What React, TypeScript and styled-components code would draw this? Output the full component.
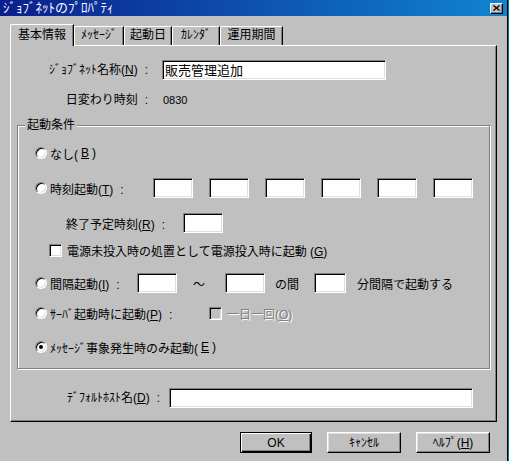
import styled, { createGlobalStyle } from "styled-components";

const GlobalStyle = createGlobalStyle`
  html, body {
    margin: 0;
    padding: 0;
    background: #008080;
  }
  body {
    font-family: "Liberation Sans", "Noto Sans CJK JP", sans-serif;
    font-size: 12px;
    color: #000000;
  }
`;

const Window = styled.div`
  width: 507px;
  height: 461px;
  background: #c0c0c0;
  border-right: 1px solid #000000;
  display: flex;
  flex-direction: column;
  overflow: hidden;
`;

const TitleBar = styled.div`
  height: 16px;
  background: linear-gradient(90deg, #0b1f8c 0%, #1084d0 100%);
  display: flex;
  align-items: center;
  justify-content: space-between;
  padding: 0 4px 0 3px;
`;

const TitleText = styled.span`
  color: #ffffff;
  font-size: 13px;
  line-height: 16px;
`;

const CloseButton = styled.div`
  width: 13px;
  height: 11px;
  box-sizing: border-box;
  background: #c0c0c0;
  border: 1px solid;
  border-color: #ffffff #000000 #000000 #ffffff;
  box-shadow: inset -1px -1px 0 #808080;
  display: flex;
  align-items: center;
  justify-content: center;
`;

const Body = styled.div`
  flex: 1;
  display: flex;
  flex-direction: column;
  padding: 8px 10px 0 10px;
`;

const TabRow = styled.div`
  display: flex;
  align-items: flex-end;
  height: 21px;
`;

const Tab = styled.div<{ $w: number; $active?: boolean }>`
  width: ${(p) => p.$w}px;
  height: ${(p) => (p.$active ? 22 : 19)}px;
  margin-bottom: ${(p) => (p.$active ? -1 : 0)}px;
  box-sizing: border-box;
  position: relative;
  z-index: ${(p) => (p.$active ? 1 : 0)};
  background: #c0c0c0;
  border-top: 1px solid #ffffff;
  border-left: 1px solid #ffffff;
  border-right: 1px solid #000000;
  border-top-left-radius: 2px;
  box-shadow: inset -1px 0 0 #808080;
  display: flex;
  justify-content: center;
  padding-top: ${(p) => (p.$active ? 3 : 1)}px;
  line-height: 14px;
  white-space: nowrap;
`;

const Panel = styled.div`
  height: 377px;
  box-sizing: border-box;
  border-top: 1px solid #ffffff;
  border-left: 1px solid #ffffff;
  border-right: 1px solid #000000;
  border-bottom: 1px solid #000000;
  box-shadow: inset -1px -1px 0 #808080;
  display: flex;
  flex-direction: column;
`;

const FieldRow = styled.div<{ $mt: number }>`
  display: flex;
  align-items: center;
  height: 20px;
  margin-top: ${(p) => p.$mt}px;
`;

const FieldLabel = styled.div<{ $w: number; $gap: number }>`
  width: ${(p) => p.$w}px;
  margin-right: ${(p) => p.$gap}px;
  text-align: right;
  white-space: nowrap;
  line-height: 20px;
`;

const Colon = styled.span`
  margin-left: 7px;
`;

const U = styled.span`
  text-decoration: underline;
`;

const TextBox = styled.div<{ $w: number }>`
  width: ${(p) => p.$w}px;
  height: 20px;
  box-sizing: border-box;
  background: #ffffff;
  border: 1px solid;
  border-color: #808080 #ffffff #ffffff #808080;
  box-shadow: inset 1px 1px 0 #000000, inset -1px -1px 0 #dfdfdf;
  padding: 1px 2px;
  font-size: 13px;
  line-height: 17px;
  white-space: nowrap;
  flex-shrink: 0;
`;

const Value = styled.span`
  margin-left: 1px;
  font-size: 11px;
`;

const Group = styled.div`
  margin: 15px 6px 0 6px;
  height: 244px;
  box-sizing: border-box;
  border: 1px solid #808080;
  box-shadow: 1px 1px 0 #ffffff, inset 1px 1px 0 #ffffff;
  display: flex;
  flex-direction: column;
  padding: 0 0 0 17px;
`;

const Legend = styled.div`
  align-self: flex-start;
  margin: -8px 0 0 -10px;
  padding: 0 2px;
  height: 14px;
  line-height: 14px;
  background: #c0c0c0;
`;

const OptionRow = styled.div<{ $mt: number; $indent?: number }>`
  display: flex;
  align-items: center;
  height: 20px;
  margin-top: ${(p) => p.$mt}px;
  padding-left: ${(p) => p.$indent ?? 0}px;
  white-space: nowrap;
`;

const RadioLabel = styled.label<{ $w?: number }>`
  display: flex;
  align-items: center;
  gap: 3px;
  width: ${(p) => (p.$w ? `${p.$w}px` : "auto")};
  flex-shrink: 0;
`;

const Radio = styled.span<{ $checked?: boolean }>`
  width: 12px;
  height: 12px;
  box-sizing: border-box;
  border-radius: 50%;
  background: #ffffff;
  border: 1px solid;
  border-color: #808080 #ffffff #ffffff #808080;
  box-shadow: inset 1px 1px 0 #000000, inset -1px -1px 0 #dfdfdf;
  display: flex;
  align-items: center;
  justify-content: center;
  &::after {
    content: "";
    width: 4px;
    height: 4px;
    border-radius: 50%;
    background: ${(p) => (p.$checked ? "#000000" : "transparent")};
  }
`;

const Check = styled.span<{ $disabled?: boolean }>`
  width: 13px;
  height: 13px;
  box-sizing: border-box;
  flex-shrink: 0;
  background: ${(p) => (p.$disabled ? "#c0c0c0" : "#ffffff")};
  border: 1px solid;
  border-color: #808080 #ffffff #ffffff #808080;
  box-shadow: inset 1px 1px 0 #000000, inset -1px -1px 0 #dfdfdf;
`;

const Text = styled.span<{ $ml?: number; $disabled?: boolean }>`
  margin-left: ${(p) => p.$ml ?? 0}px;
  color: ${(p) => (p.$disabled ? "#808080" : "#000000")};
  text-shadow: ${(p) => (p.$disabled ? "1px 1px 0 #ffffff" : "none")};
`;

const TimeBoxes = styled.div`
  display: flex;
  gap: 16px;
`;

const ButtonRow = styled.div`
  display: flex;
  justify-content: flex-end;
  gap: 15px;
  margin-top: 10px;
  padding-right: 7px;
`;

const Button = styled.div<{ $w: number; $default?: boolean }>`
  width: ${(p) => p.$w}px;
  height: 21px;
  box-sizing: border-box;
  background: #c0c0c0;
  border: 1px solid;
  border-color: ${(p) =>
    p.$default ? "#000000" : "#ffffff #000000 #000000 #ffffff"};
  box-shadow: ${(p) =>
    p.$default
      ? "inset 1px 1px 0 #ffffff, inset -1px -1px 0 #000000, inset -2px -2px 0 #808080"
      : "inset -1px -1px 0 #808080, inset 1px 1px 0 #dfdfdf"};
  display: flex;
  align-items: center;
  justify-content: center;
  line-height: 14px;
  white-space: nowrap;
`;

export default function App() {
  return (
    <>
      <GlobalStyle />
      <Window>
        <TitleBar>
          <TitleText>ｼﾞｮﾌﾞﾈｯﾄのﾌﾟﾛﾊﾟﾃｨ</TitleText>
          <CloseButton>
            <svg width="7" height="6" viewBox="0 0 7 6">
              <path d="M0.5 0.5 L6.5 5.5 M6.5 0.5 L0.5 5.5" stroke="#000" strokeWidth="1.3" />
            </svg>
          </CloseButton>
        </TitleBar>
        <Body>
          <TabRow>
            <Tab $w={64} $active>基本情報</Tab>
            <Tab $w={50}>ﾒｯｾｰｼﾞ</Tab>
            <Tab $w={48}>起動日</Tab>
            <Tab $w={48}>ｶﾚﾝﾀﾞ</Tab>
            <Tab $w={63}>運用期間</Tab>
          </TabRow>
          <Panel>
            <FieldRow $mt={14}>
              <FieldLabel $w={137} $gap={14}>
                ｼﾞｮﾌﾞﾈｯﾄ名称(<U>N</U>)<Colon>:</Colon>
              </FieldLabel>
              <TextBox $w={224}>販売管理追加</TextBox>
            </FieldRow>
            <FieldRow $mt={10}>
              <FieldLabel $w={137} $gap={14}>
                日変わり時刻<Colon>:</Colon>
              </FieldLabel>
              <Value>0830</Value>
            </FieldRow>

            <Group>
              <Legend>起動条件</Legend>

              <OptionRow $mt={11}>
                <RadioLabel>
                  <Radio />
                  なし(<U>B</U>)
                </RadioLabel>
              </OptionRow>

              <OptionRow $mt={15}>
                <RadioLabel $w={118}>
                  <Radio />
                  <span>
                    時刻起動(<U>T</U>)<Colon>:</Colon>
                  </span>
                </RadioLabel>
                <TimeBoxes>
                  {[0, 1, 2, 3, 4, 5].map((i) => (
                    <TextBox key={i} $w={40} />
                  ))}
                </TimeBoxes>
              </OptionRow>

              <OptionRow $mt={15} $indent={31}>
                <Text>
                  終了予定時刻(<U>R</U>)<Colon>:</Colon>
                </Text>
                <Text $ml={18} />
                <TextBox $w={40} />
              </OptionRow>

              <OptionRow $mt={7} $indent={14}>
                <Check />
                <Text $ml={5}>
                  電源未投入時の処置として電源投入時に起動 (<U>G</U>)
                </Text>
              </OptionRow>

              <OptionRow $mt={13}>
                <RadioLabel $w={102}>
                  <Radio />
                  <span>
                    間隔起動(<U>I</U>)<Colon>:</Colon>
                  </span>
                </RadioLabel>
                <TextBox $w={40} />
                <Text $ml={16}>～</Text>
                <Text $ml={20} />
                <TextBox $w={40} />
                <Text $ml={10}>の間</Text>
                <Text $ml={15} />
                <TextBox $w={32} />
                <Text $ml={11}>分間隔で起動する</Text>
              </OptionRow>

              <OptionRow $mt={10}>
                <RadioLabel $w={174}>
                  <Radio />
                  <span>
                    ｻｰﾊﾞ起動時に起動(<U>P</U>)<Colon>:</Colon>
                  </span>
                </RadioLabel>
                <Check $disabled />
                <Text $ml={5} $disabled>
                  一日一回(<U>O</U>)
                </Text>
              </OptionRow>

              <OptionRow $mt={14}>
                <RadioLabel>
                  <Radio $checked />
                  ﾒｯｾｰｼﾞ事象発生時のみ起動(<U>E</U>)
                </RadioLabel>
              </OptionRow>
            </Group>

            <FieldRow $mt={19}>
              <FieldLabel $w={149} $gap={9}>
                ﾃﾞﾌｫﾙﾄﾎｽﾄ名(<U>D</U>)<Colon>:</Colon>
              </FieldLabel>
              <TextBox $w={304} />
            </FieldRow>
          </Panel>

          <ButtonRow>
            <Button $w={72} $default>OK</Button>
            <Button $w={74}>ｷｬﾝｾﾙ</Button>
            <Button $w={74}>
              ﾍﾙﾌﾟ(<U>H</U>)
            </Button>
          </ButtonRow>
        </Body>
      </Window>
    </>
  );
}
